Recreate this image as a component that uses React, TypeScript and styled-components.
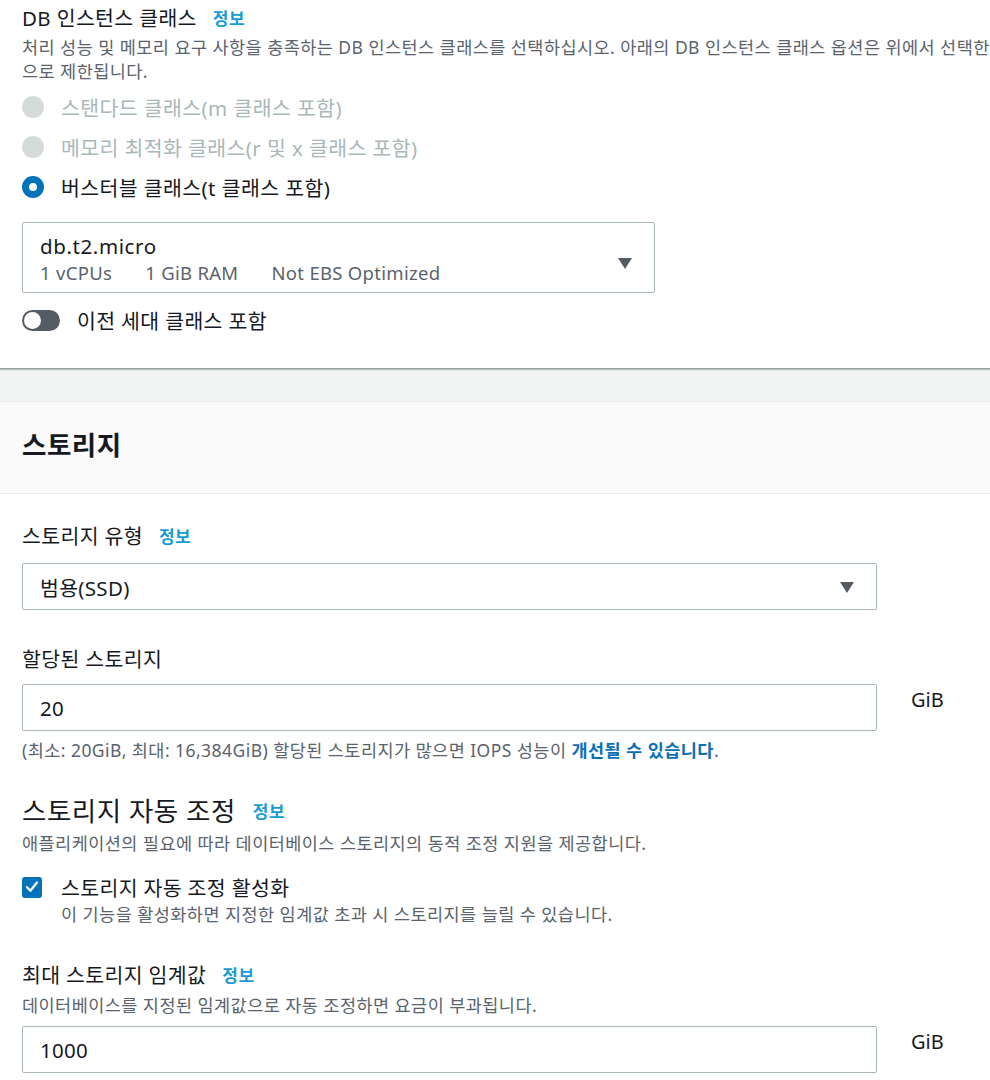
import styled, { createGlobalStyle } from 'styled-components';

const GlobalStyle = createGlobalStyle`
  html, body {
    margin: 0;
    padding: 0;
    background: #f2f3f3;
    overflow-x: hidden;
  }
  body {
    font-family: 'Noto Sans', 'Noto Sans CJK KR', sans-serif;
    color: #16191f;
  }
`;

const Page = styled.div({
  width: '990px',
  display: 'flex',
  flexDirection: 'column',
  gap: '32px',
});

const Card = styled.section({
  background: '#fff',
  overflow: 'hidden',
});

const InstanceCard = styled(Card)({
  padding: '6px 0 36px 22px',
  borderBottom: '1px solid #97a3a5',
  boxShadow: '0 1px 1px rgba(0, 28, 36, 0.25)',
});

const StorageCard = styled(Card)({
  borderTop: '1px solid #eaeded',
});

const CardHeader = styled.header({
  height: '92px',
  background: '#fafafa',
  borderBottom: '1px solid #eaeded',
  display: 'flex',
  alignItems: 'center',
  padding: '0 22px 6px',
  boxSizing: 'border-box',
});

const CardTitle = styled.h2({
  margin: 0,
  fontSize: '26.5px',
  fontWeight: 700,
  letterSpacing: '0.5px',
  lineHeight: '30px',
});

const CardBody = styled.div({
  padding: '30px 22px 20px',
  display: 'flex',
  flexDirection: 'column',
});

const LabelRow = styled.div<{ $big?: boolean; $gap?: number }>((p) => ({
  display: 'flex',
  alignItems: 'center',
  gap: p.$big ? '17px' : '16px',
  fontSize: p.$big ? '26.5px' : '20.5px',
  letterSpacing: p.$big ? '0.5px' : '0.35px',
  lineHeight: p.$big ? '30px' : '24px',
  marginTop: `${p.$gap ?? 0}px`,
}));

const InfoLink = styled.a({
  fontSize: '17px',
  fontWeight: 700,
  letterSpacing: '0.5px',
  color: '#169bd5',
  textDecoration: 'none',
  lineHeight: '20px',
  paddingTop: '2px',
});

const Description = styled.p<{ $gap?: number }>((p) => ({
  margin: `${p.$gap ?? 0}px 0 0`,
  fontSize: '17.5px',
  letterSpacing: '0.45px',
  lineHeight: '22px',
  color: '#5a636d',
  whiteSpace: 'nowrap',
}));

const WideDescription = styled(Description)({
  lineHeight: '24px',
});

const HelpLink = styled.a({
  color: '#0b6fb8',
  fontWeight: 700,
  textDecoration: 'none',
});

const RadioGroup = styled.div({
  marginTop: '4px',
  display: 'flex',
  flexDirection: 'column',
});

const RadioRow = styled.label<{ $disabled?: boolean }>((p) => ({
  height: '40px',
  display: 'flex',
  alignItems: 'center',
  gap: '17px',
  fontSize: '20.5px',
  letterSpacing: '0.4px',
  color: p.$disabled ? '#aab7b8' : '#16191f',
}));

const RadioDot = styled.span<{ $checked?: boolean; $disabled?: boolean }>((p) => ({
  width: '22px',
  height: '22px',
  borderRadius: '50%',
  boxSizing: 'border-box',
  background: p.$disabled ? '#d5dbdb' : '#fff',
  border: p.$checked ? '7px solid #0073bb' : p.$disabled ? 'none' : '2px solid #879596',
  flexShrink: 0,
}));

const InstanceSelect = styled.div({
  marginTop: '15px',
  width: '633px',
  height: '71px',
  boxSizing: 'border-box',
  border: '1px solid #aab7b8',
  borderRadius: '2px',
  padding: '9px 22px 0 17px',
  display: 'flex',
  justifyContent: 'space-between',
  alignItems: 'center',
});

const SelectText = styled.div({
  alignSelf: 'flex-start',
});

const SelectValue = styled.div({
  fontSize: '20.5px',
  letterSpacing: '0.6px',
  lineHeight: '28px',
});

const SpecLine = styled.div({
  display: 'flex',
  gap: '33px',
  fontSize: '18.5px',
  letterSpacing: '0.3px',
  lineHeight: '26px',
  color: '#5a636d',
});

const Caret = styled.span({
  width: 0,
  height: 0,
  borderLeft: '7px solid transparent',
  borderRight: '7px solid transparent',
  borderTop: '11px solid #545b64',
  marginTop: '2px',
});

const ToggleRow = styled.label({
  marginTop: '15px',
  height: '24px',
  display: 'flex',
  alignItems: 'center',
  gap: '17px',
  fontSize: '20.5px',
  letterSpacing: '0.35px',
});

const ToggleTrack = styled.span({
  width: '38px',
  height: '21px',
  borderRadius: '11px',
  background: '#545b64',
  display: 'flex',
  alignItems: 'center',
  padding: '0 2px',
  boxSizing: 'border-box',
});

const ToggleKnob = styled.span({
  width: '17px',
  height: '17px',
  borderRadius: '50%',
  background: '#fff',
});

const Select = styled.div<{ $gap?: number }>((p) => ({
  marginTop: `${p.$gap ?? 0}px`,
  width: '855px',
  height: '47px',
  boxSizing: 'border-box',
  border: '1px solid #aab7b8',
  borderRadius: '2px',
  padding: '0 22px 0 17px',
  display: 'flex',
  alignItems: 'center',
  justifyContent: 'space-between',
  fontSize: '20.5px',
  letterSpacing: '0.3px',
}));

const InputRow = styled.div<{ $gap?: number }>((p) => ({
  marginTop: `${p.$gap ?? 0}px`,
  display: 'flex',
  alignItems: 'flex-start',
  gap: '34px',
}));

const Input = styled.div({
  width: '855px',
  height: '47px',
  boxSizing: 'border-box',
  border: '1px solid #aab7b8',
  borderRadius: '2px',
  padding: '0 17px',
  display: 'flex',
  alignItems: 'center',
  fontSize: '20.5px',
  letterSpacing: '0.3px',
});

const Unit = styled.span({
  marginTop: '4px',
  fontSize: '20px',
  lineHeight: '24px',
});

const CheckRow = styled.label({
  marginTop: '20px',
  height: '26px',
  display: 'flex',
  alignItems: 'center',
  gap: '19px',
  fontSize: '20.5px',
  letterSpacing: '0.35px',
});

const CheckBox = styled.span({
  width: '20px',
  height: '21px',
  borderRadius: '3px',
  background: '#0073bb',
  display: 'flex',
  alignItems: 'center',
  justifyContent: 'center',
});

const CheckHint = styled(Description)({
  marginLeft: '39px',
  marginTop: '3px',
});

const Check = () => (
  <svg width="14" height="14" viewBox="0 0 14 14">
    <path d="M2 7.2 L5.4 10.8 L12 2.6" fill="none" stroke="#fff" strokeWidth="2.4" strokeLinecap="round" strokeLinejoin="round" />
  </svg>
);

export default function App() {
  return (
    <>
      <GlobalStyle />
      <Page>
        <InstanceCard>
          <LabelRow>
            DB 인스턴스 클래스
            <InfoLink>정보</InfoLink>
          </LabelRow>
          <WideDescription $gap={5}>
            처리 성능 및 메모리 요구 사항을 충족하는 DB 인스턴스 클래스를 선택하십시오. 아래의 DB 인스턴스 클래스 옵션은 위에서 선택한
            <br />
            으로 제한됩니다.
          </WideDescription>

          <RadioGroup>
            <RadioRow $disabled>
              <RadioDot $disabled />
              스탠다드 클래스(m 클래스 포함)
            </RadioRow>
            <RadioRow $disabled>
              <RadioDot $disabled />
              메모리 최적화 클래스(r 및 x 클래스 포함)
            </RadioRow>
            <RadioRow>
              <RadioDot $checked />
              버스터블 클래스(t 클래스 포함)
            </RadioRow>
          </RadioGroup>

          <InstanceSelect>
            <SelectText>
              <SelectValue>db.t2.micro</SelectValue>
              <SpecLine>
                <span>1 vCPUs</span>
                <span>1 GiB RAM</span>
                <span>Not EBS Optimized</span>
              </SpecLine>
            </SelectText>
            <Caret />
          </InstanceSelect>

          <ToggleRow>
            <ToggleTrack>
              <ToggleKnob />
            </ToggleTrack>
            이전 세대 클래스 포함
          </ToggleRow>
        </InstanceCard>

        <StorageCard>
          <CardHeader>
            <CardTitle>스토리지</CardTitle>
          </CardHeader>
          <CardBody>
            <LabelRow>
              스토리지 유형
              <InfoLink>정보</InfoLink>
            </LabelRow>
            <Select $gap={15}>
              범용(SSD)
              <Caret />
            </Select>

            <LabelRow $gap={37}>할당된 스토리지</LabelRow>
            <InputRow $gap={13}>
              <Input>20</Input>
              <Unit>GiB</Unit>
            </InputRow>
            <Description $gap={8}>
              (최소: 20GiB, 최대: 16,384GiB) 할당된 스토리지가 많으면 IOPS 성능이 <HelpLink>개선될 수 있습니다</HelpLink>.
            </Description>

            <LabelRow $big $gap={35}>
              스토리지 자동 조정
              <InfoLink>정보</InfoLink>
            </LabelRow>
            <Description $gap={6}>
              애플리케이션의 필요에 따라 데이터베이스 스토리지의 동적 조정 지원을 제공합니다.
            </Description>

            <CheckRow>
              <CheckBox>
                <Check />
              </CheckBox>
              스토리지 자동 조정 활성화
            </CheckRow>
            <CheckHint>이 기능을 활성화하면 지정한 임계값 초과 시 스토리지를 늘릴 수 있습니다.</CheckHint>

            <LabelRow $gap={38}>
              최대 스토리지 임계값
              <InfoLink>정보</InfoLink>
            </LabelRow>
            <Description $gap={7}>데이터베이스를 지정된 임계값으로 자동 조정하면 요금이 부과됩니다.</Description>
            <InputRow $gap={10}>
              <Input>1000</Input>
              <Unit>GiB</Unit>
            </InputRow>
          </CardBody>
        </StorageCard>
      </Page>
    </>
  );
}
